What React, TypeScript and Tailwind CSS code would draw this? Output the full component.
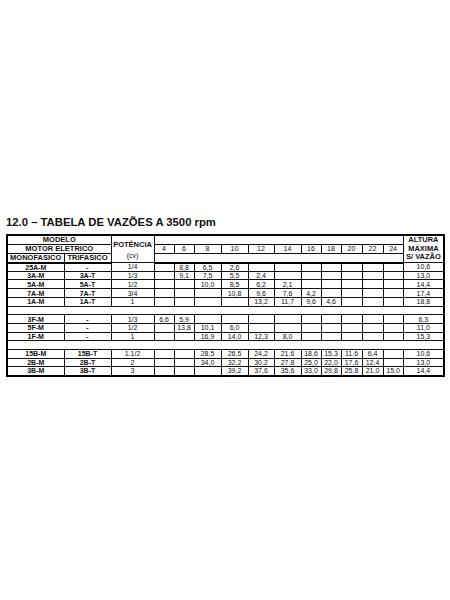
import React from "react";

const widths = [57, 47, 43, 20, 20, 27, 27, 26, 27, 20, 20, 21, 21, 20, 41];
const flows = ["4", "6", "8", "10", "12", "14", "16", "18", "20", "22", "24"];

type Row = { m: string; t: string; p: string; v: string[]; a: string };

const g1: Row[] = [
  { m: "25A-M", t: "-", p: "1/4", v: ["", "8,8", "6,5", "2,6", "", "", "", "", "", "", ""], a: "10,6" },
  { m: "3A-M", t: "3A-T", p: "1/3", v: ["", "9,1", "7,5", "5,5", "2,4", "", "", "", "", "", ""], a: "13,0" },
  { m: "5A-M", t: "5A-T", p: "1/2", v: ["", "", "10,0", "8,5", "6,2", "2,1", "", "", "", "", ""], a: "14,4" },
  { m: "7A-M", t: "7A-T", p: "3/4", v: ["", "", "", "10,8", "9,6", "7,6", "4,2", "", "", "", ""], a: "17,4" },
  { m: "1A-M", t: "1A-T", p: "1", v: ["", "", "", "", "13,2", "11,7", "9,6", "4,6", "", "", ""], a: "18,8" },
];
const g2: Row[] = [
  { m: "3F-M", t: "-", p: "1/3", v: ["6,6", "5,9", "", "", "", "", "", "", "", "", ""], a: "6,3" },
  { m: "5F-M", t: "-", p: "1/2", v: ["", "13,8", "10,1", "6,0", "", "", "", "", "", "", ""], a: "11,0" },
  { m: "1F-M", t: "-", p: "1", v: ["", "", "16,9", "14,0", "12,3", "8,0", "", "", "", "", ""], a: "15,3" },
];
const g3: Row[] = [
  { m: "15B-M", t: "15B-T", p: "1.1/2", v: ["", "", "28,5", "26,5", "24,2", "21,6", "18,6", "15,3", "11,6", "6,4", ""], a: "10,6" },
  { m: "2B-M", t: "2B-T", p: "2", v: ["", "", "34,0", "32,2", "30,2", "27,8", "25,0", "22,0", "17,6", "12,4", ""], a: "13,0" },
  { m: "3B-M", t: "3B-T", p: "3", v: ["", "", "", "39,2", "37,6", "35,6", "33,0", "29,8", "25,8", "21,0", "15,0"], a: "14,4" },
];

const cell = "border border-[#111] p-0 h-[8.7px] leading-none text-center align-middle";

function DataRow({ r }: { r: Row }) {
  return (
    <tr>
      <td className={`${cell} font-bold`}>{r.m}</td>
      <td className={`${cell} font-bold`}>{r.t}</td>
      <td className={cell}>{r.p}</td>
      {r.v.map((x, i) => (
        <td key={i} className={cell}>{x}</td>
      ))}
      <td className={cell}>{r.a}</td>
    </tr>
  );
}

function Sep() {
  return (
    <tr>
      <td colSpan={15} className="border border-[#111] border-t-[#222] p-0 h-[8.7px] bg-white"></td>
    </tr>
  );
}

export default function App() {
  return (
    <div className="w-[450px] h-[600px] bg-white text-[#111]" style={{ fontFamily: '"Liberation Sans", Arial, sans-serif' }}>
      <div className="pt-[216px] pl-[6px]">
        <div className="text-[11.3px] font-bold leading-[13px] h-[18px]">12.0 – TABELA DE VAZÕES A 3500 rpm</div>
        <table className="border-collapse table-fixed border-2 border-black text-[7px]" style={{ width: 437 }}>
          <colgroup>
            {widths.map((w, i) => (
              <col key={i} style={{ width: w }} />
            ))}
          </colgroup>
          <tbody>
            <tr>
              <td colSpan={2} className={`${cell} font-bold text-[7.5px]`}>MODELO</td>
              <td rowSpan={3} className="border border-[#111] p-0 text-center align-top leading-none">
                <div className="font-bold text-[7.5px] pt-[5px]">POTÊNCIA</div>
                <div className="text-[7px] pt-[3px]">(cv)</div>
              </td>
              <td colSpan={11} className={cell}></td>
              <td rowSpan={3} className="border border-[#111] p-0 text-center align-middle font-bold text-[7.5px] leading-[8.7px]">
                <div>ALTURA</div>
                <div>MÁXIMA</div>
                <div>S/ VAZÃO</div>
              </td>
            </tr>
            <tr>
              <td colSpan={2} className={`${cell} font-bold text-[7.5px]`}>MOTOR ELETRICO</td>
              {flows.map((f) => (
                <td key={f} className={cell}>{f}</td>
              ))}
            </tr>
            <tr>
              <td className={`${cell} font-bold text-[7.5px] border-b-2 border-b-black`}>MONOFASICO</td>
              <td className={`${cell} font-bold text-[7.5px] border-b-2 border-b-black`}>TRIFASICO</td>
              <td colSpan={11} className={`${cell} border-b-2 border-b-black`}></td>
            </tr>
            {g1.map((r) => <DataRow key={r.m} r={r} />)}
            <Sep />
            {g2.map((r) => <DataRow key={r.m} r={r} />)}
            <Sep />
            {g3.map((r) => <DataRow key={r.m} r={r} />)}
          </tbody>
        </table>
      </div>
    </div>
  );
}
